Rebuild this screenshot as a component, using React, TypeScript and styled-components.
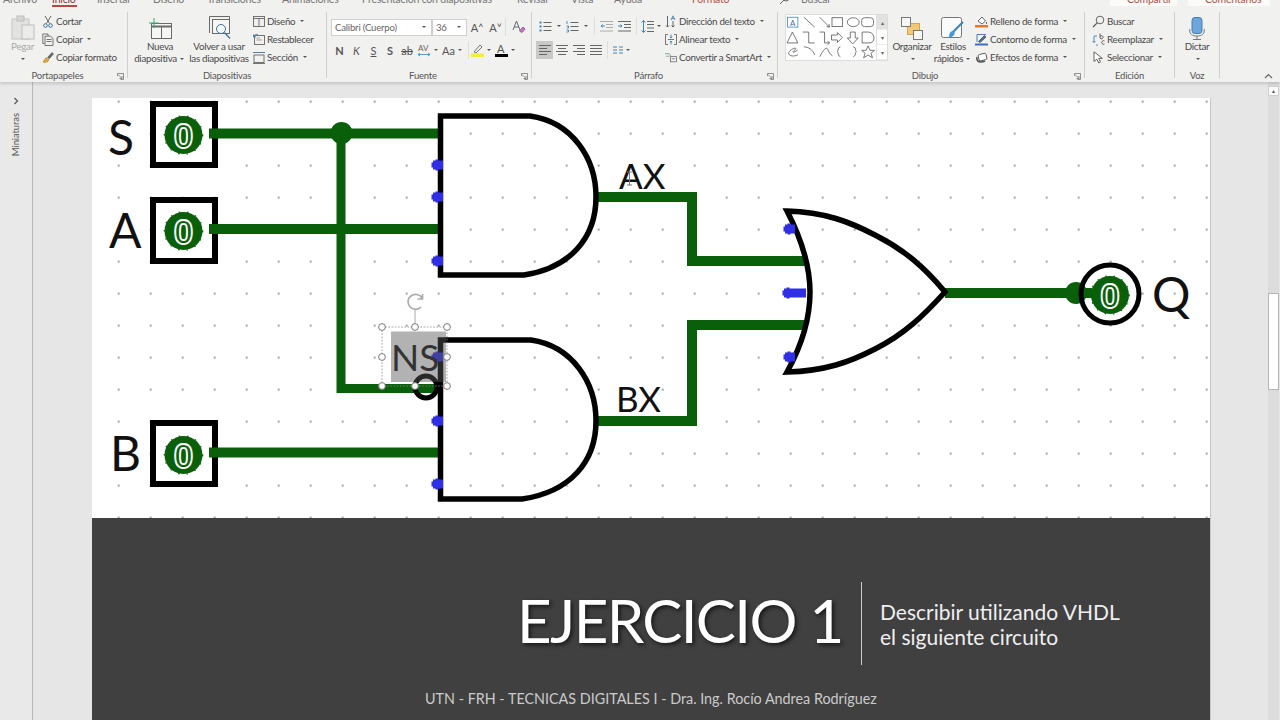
import React from "react";
import styled, { createGlobalStyle } from "styled-components";

const GlobalStyle = createGlobalStyle`
  html, body { margin: 0; padding: 0; height: 100%; overflow: hidden; background: #e6e6e6; }
  body { font-family: Lato, "Open Sans", sans-serif; color: #444; }
  #root { height: 100%; }
`;

const wire = "#0a5f0a";
const pin = "#2f2fe6";

const Window = styled.div`
  width: 1280px;
  height: 720px;
  display: flex;
  flex-direction: column;
  overflow: hidden;
`;

/* ---------- ribbon ---------- */

const Ribbon = styled.header`
  flex: none;
  height: 82px;
  background: #f1f1ef;
  box-shadow: 0 2px 3px rgba(0, 0, 0, 0.14);
  position: relative;
  z-index: 2;
`;

const TabBar = styled.nav`
  height: 8px;
  padding-left: 3px;
  display: flex;
  align-items: flex-end;
  overflow: hidden;
  font-size: 10.5px;
  letter-spacing: -0.2px;
  line-height: 14px;
  color: #777;
`;

const Tab = styled.span<{ $w: number; $active?: boolean; $red?: boolean }>`
  flex: none;
  width: ${(p) => p.$w}px;
  height: 14px;
  margin-bottom: 2px;
  white-space: nowrap;
  color: ${(p) => (p.$red ? "#b8544a" : p.$active ? "#8f3a32" : "#777")};
`;

const ActiveTab = styled(Tab)`
  position: relative;
  &::after {
    content: "";
    position: absolute;
    left: 0;
    top: 13px;
    width: 25px;
    height: 2px;
    background: #b5483c;
  }
`;

const TabSearch = styled.svg`
  flex: none;
  width: 11px;
  height: 11px;
  margin: 0 11px 3px 0;
`;

const ShareButton = styled.span<{ $w: number }>`
  flex: none;
  width: ${(p) => p.$w}px;
  height: 14px;
  box-sizing: border-box;
  padding-left: 17px;
  margin-right: 11px;
  margin-bottom: 2px;
  background: #fbfbfa;
  color: #b8544a;
  white-space: nowrap;
`;

const Groups = styled.div`
  display: flex;
  height: 74px;
`;

const Group = styled.section<{ $w: number }>`
  flex: none;
  width: ${(p) => p.$w}px;
  display: flex;
  flex-direction: column;
  padding-top: 4px;
  box-sizing: border-box;
`;

const Body = styled.div<{ $pl?: number }>`
  flex: none;
  height: 58px;
  padding-left: ${(p) => p.$pl ?? 0}px;
  display: flex;
`;

const GroupLabel = styled.div<{ $launcher?: boolean }>`
  position: relative;
  height: 12px;
  padding-right: ${(p) => (p.$launcher ? 12 : 0)}px;
  font-size: 9.5px;
  letter-spacing: -0.2px;
  line-height: 12px;
  text-align: center;
  color: #555;
`;

const Launcher = styled.svg`
  position: absolute;
  right: 3px;
  top: 3px;
  width: 7px;
  height: 7px;
`;

const Separator = styled.div`
  flex: none;
  width: 1px;
  margin: 4px 0 4px;
  background: #cfcfcd;
`;

const Column = styled.div<{ $ml?: number }>`
  display: flex;
  flex-direction: column;
  margin-left: ${(p) => p.$ml ?? 0}px;
`;

const SmallCommand = styled.div<{ $iconW?: number }>`
  height: 18px;
  display: flex;
  align-items: center;
  gap: 2px;
  font-size: 9.8px;
  letter-spacing: -0.3px;
  color: #4a4a4a;
  white-space: nowrap;
  svg {
    flex: none;
    width: ${(p) => p.$iconW ?? 12}px;
    height: 13px;
  }
`;

const BigCommand = styled.div<{ $w: number; $ml?: number; $muted?: boolean }>`
  flex: none;
  width: ${(p) => p.$w}px;
  margin-left: ${(p) => p.$ml ?? 0}px;
  display: flex;
  flex-direction: column;
  align-items: center;
  font-size: 9.8px;
  letter-spacing: -0.3px;
  line-height: 12px;
  color: ${(p) => (p.$muted ? "#aaa" : "#4a4a4a")};
  white-space: nowrap;
`;

const BigIcon = styled.div`
  height: 28px;
  display: flex;
  align-items: flex-end;
  svg {
    display: block;
  }
`;

const Caret = styled.span`
  display: inline-block;
  width: 0;
  height: 0;
  margin: 0 2px 1px 3px;
  vertical-align: middle;
  border-left: 2px solid transparent;
  border-right: 2px solid transparent;
  border-top: 2px solid #555;
`;

const FontPanel = styled.div`
  display: flex;
  flex-direction: column;
  gap: 5px;
  padding-top: 6px;
`;

const FontRow = styled.div`
  height: 18px;
  display: flex;
  align-items: center;
`;

const SelectBox = styled.div<{ $w: number }>`
  flex: none;
  width: ${(p) => p.$w}px;
  height: 17px;
  box-sizing: border-box;
  padding: 0 3px;
  background: #fff;
  border: 1px solid #cfcfcf;
  font-size: 9.6px;
  letter-spacing: -0.2px;
  line-height: 15px;
  color: #666;
  display: flex;
  align-items: center;
  justify-content: space-between;
`;

const FontButton = styled.span<{ $w: number; $bold?: boolean; $italic?: boolean; $under?: boolean; $strike?: boolean }>`
  flex: none;
  width: ${(p) => p.$w}px;
  display: flex;
  align-items: center;
  justify-content: center;
  font-size: 11px;
  color: #555;
  font-weight: ${(p) => (p.$bold ? 700 : 400)};
  font-style: ${(p) => (p.$italic ? "italic" : "normal")};
  text-decoration: ${(p) => (p.$under ? "underline" : p.$strike ? "line-through" : "none")};
`;

const IconSlot = styled.span<{ $w: number; $active?: boolean }>`
  flex: none;
  width: ${(p) => p.$w}px;
  height: 18px;
  display: flex;
  align-items: center;
  justify-content: center;
  background: ${(p) => (p.$active ? "#c9c9c9" : "transparent")};
`;

const ToolGap = styled.span<{ $w: number }>`
  flex: none;
  width: ${(p) => p.$w}px;
  height: 18px;
  display: flex;
  justify-content: center;
  &::before {
    content: "";
    width: 1px;
    background: #dededc;
  }
`;

const ParagraphPanel = styled.div`
  flex: none;
  width: 129px;
  display: flex;
  flex-direction: column;
  padding-top: 5px;
  gap: 6px;
`;

const Gallery = styled.div`
  flex: none;
  width: 103px;
  height: 47px;
  margin-top: 2px;
  display: flex;
  background: #fff;
  border: 1px solid #dcdcdc;
  box-sizing: border-box;
`;

const GalleryScroll = styled.div`
  flex: none;
  width: 10px;
  margin-left: auto;
  border-left: 1px solid #e0e0e0;
  display: flex;
  flex-direction: column;
`;

const GalleryStep = styled.span<{ $off?: boolean }>`
  flex: 1;
  display: flex;
  align-items: center;
  justify-content: center;
  background: ${(p) => (p.$off ? "#e2e2e2" : "#fff")};
  font-size: 6px;
  color: #666;
  border-bottom: 1px solid #eee;
`;

const Collapse = styled.svg`
  align-self: flex-end;
  flex: none;
  margin: 0 7px 3px auto;
  width: 9px;
  height: 6px;
`;

/* ---------- workspace ---------- */

const Workspace = styled.main`
  flex: 1;
  min-height: 0;
  display: flex;
  background: #e6e6e6;
`;

const Thumbnails = styled.aside`
  flex: none;
  width: 32px;
  border-right: 1px solid #b9b9b9;
  background: #e9e9e9;
  display: flex;
  flex-direction: column;
  align-items: center;
  padding-top: 15px;
  box-sizing: content-box;
`;

const ThumbLabel = styled.span`
  margin-top: 8px;
  writing-mode: vertical-rl;
  transform: rotate(180deg);
  font-size: 9.5px;
  letter-spacing: -0.1px;
  line-height: 10px;
  color: #555;
`;

const Stage = styled.div`
  flex: 1;
  min-width: 0;
  padding: 16px 0 0 59px;
`;

const Slide = styled.article`
  width: 1118px;
  height: 622px;
  display: flex;
  flex-direction: column;
  box-shadow: 1px 0 0 #c4c4c4;
`;

const Circuit = styled.svg`
  display: block;
  flex: none;
  width: 1118px;
  height: 420px;
  background: #fff;
  font-family: Lato, sans-serif;
`;

const Band = styled.div`
  flex: 1;
  background: #404040;
  color: #fff;
`;

const TitleRow = styled.div`
  margin-top: 64px;
  padding-left: 425px;
  height: 83px;
  display: flex;
  align-items: center;
`;

const Title = styled.h1`
  flex: none;
  width: 323px;
  margin: 0 21px 8px 0;
  font-size: 60px;
  font-weight: 400;
  line-height: 74px;
  letter-spacing: -1.65px;
  white-space: nowrap;
  text-shadow: 2px 2px 4px rgba(0, 0, 0, 0.65);
`;

const TitleRule = styled.div`
  flex: none;
  width: 1px;
  height: 83px;
  background: #cfcfcf;
`;

const Lead = styled.p`
  margin: 0 0 0 18px;
  font-size: 21px;
  line-height: 25px;
  color: #efefef;
  white-space: nowrap;
`;

const Byline = styled.p`
  margin: 25px 0 0;
  padding-left: 333px;
  font-size: 14.35px;
  line-height: 18px;
  color: #cbcbcb;
  white-space: nowrap;
`;

const Scrollbar = styled.div`
  flex: none;
  width: 11px;
  margin-right: 1px;
  background: #dcdcdc;
  display: flex;
  flex-direction: column;
`;

const ScrollUp = styled.div`
  flex: none;
  margin-top: 4px;
  height: 10px;
  background: #fafafa;
  border: 1px solid #cfcfcf;
  box-sizing: border-box;
  display: flex;
  align-items: center;
  justify-content: center;
  font-size: 5px;
  color: #555;
`;

const ScrollThumb = styled.div`
  flex: none;
  margin-top: 197px;
  height: 97px;
  background: #fff;
  border: 1px solid #b5b5b5;
  box-sizing: border-box;
`;

/* ---------- ribbon icons ---------- */

const launcher = (
  <Launcher viewBox="0 0 7 7" fill="none" stroke="#777" strokeWidth="0.8">
    <path d="M0.5 3V0.5H6.5V6.5H3.5M1 1.5L5 5.5M5 3V5.5H2.5" />
  </Launcher>
);

const Scissors = () => (
  <svg viewBox="0 0 12 13" fill="none" stroke="#3f6f9a" strokeWidth="1">
    <path d="M3 1L7.5 8.5M9 1L4.5 8.5" stroke="#666" />
    <circle cx="3.5" cy="10.5" r="1.8" />
    <circle cx="8.5" cy="10.5" r="1.8" />
  </svg>
);
const CopyIcon = () => (
  <svg viewBox="0 0 12 13" fill="none" stroke="#666" strokeWidth="0.9">
    <path d="M2.5 10.5H.8V1H6V3" />
    <path d="M3 3.2H8.5L11 5.5V12.5H3ZM4.5 6.5H9.5M4.5 8.5H9.5" />
  </svg>
);
const Brush = () => (
  <svg viewBox="0 0 12 13" fill="none">
    <path d="M1 11L4 6.5L7 9C6 11 3 12 1 11Z" fill="#e0a93f" stroke="#a87a22" strokeWidth="0.6" />
    <path d="M5.5 6.5L10 1.5L11.5 3L7 8" fill="#666" stroke="#555" strokeWidth="0.6" />
  </svg>
);
const LayoutIcon = () => (
  <svg viewBox="0 0 12 13" fill="none" stroke="#666" strokeWidth="0.9">
    <rect x="0.5" y="1.5" width="11" height="10" fill="#eee" />
    <path d="M0.5 3.5H11.5M6 3.5V11.5" />
  </svg>
);
const ResetIcon = () => (
  <svg viewBox="0 0 12 13" fill="none" stroke="#666" strokeWidth="0.9">
    <rect x="1.5" y="2.5" width="10" height="9" />
    <path d="M3.5 5H7M3.5 7H9" stroke="#999" />
    <path d="M0.5 4C1 2 3 1 5 1.5M0.5 1.5V4H3" stroke="#3f7fb5" />
  </svg>
);
const SectionIcon = () => (
  <svg viewBox="0 0 12 13" fill="none" stroke="#666" strokeWidth="0.9">
    <rect x="1" y="4" width="10" height="7.5" />
    <path d="M0 1.5H12" stroke="#3f6f9a" />
    <path d="M0 12.5H12" />
  </svg>
);
const NewSlide = () => (
  <svg width="24" height="22" viewBox="0 0 24 22" fill="none" stroke="#6a6a6a">
    <rect x="3.5" y="5.5" width="20" height="15" fill="#f6f6f5" />
    <path d="M3.5 8.5H23.5" strokeWidth="2" />
    <path d="M13.5 9V20.5" />
    <path d="M6 0V10M1 5H11" stroke="#3da878" />
  </svg>
);
const ReuseSlide = () => (
  <svg width="24" height="24" viewBox="0 0 24 24" fill="none" stroke="#6a6a6a">
    <path d="M2.5 17V0.5H22.5V14" />
    <rect x="5.5" y="3.5" width="17" height="14" fill="#f6f6f5" />
    <circle cx="14" cy="13" r="4.5" stroke="#3f6f9a" fill="#f8fbfd" />
    <path d="M17.5 16.5L23 22.5" stroke="#3f6f9a" strokeWidth="1.3" />
  </svg>
);
const Paste = () => (
  <svg width="24" height="25" viewBox="0 0 24 25" fill="none">
    <rect x="1" y="4" width="17" height="20" fill="#e2e2e0" stroke="#c4c4c2" />
    <rect x="6" y="1" width="7" height="5" fill="#d6d6d4" stroke="#bdbdbb" />
    <rect x="11" y="10" width="12" height="14" fill="#ececea" stroke="#bdbdbb" />
  </svg>
);
const Bullets = () => (
  <svg width="13" height="13" viewBox="0 0 13 13" fill="none" stroke="#666">
    <path d="M4.5 2.5H12.5M4.5 6.5H12.5M4.5 10.5H12.5" />
    <path d="M.5 2.5H2.5M.5 6.5H2.5M.5 10.5H2.5" stroke="#3f84b5" strokeWidth="2" />
  </svg>
);
const Numbers = () => (
  <svg width="13" height="13" viewBox="0 0 13 13" fill="none" stroke="#666">
    <path d="M4.5 2.5H12.5M4.5 6.5H12.5M4.5 10.5H12.5" />
    <path d="M1 1V4M.5 6H2.5V8H1M.5 10H2.5V12H.5" stroke="#3f84b5" strokeWidth="0.9" />
  </svg>
);
const Indent = ({ out }: { out?: boolean }) => (
  <svg width="13" height="11" viewBox="0 0 13 11" fill="none" stroke={out ? "#aaa" : "#666"}>
    <path d="M0 .5H13M6 3.5H13M6 6.5H13M0 10H13" />
    <path d={out ? "M5 5H1M2.5 3.5L1 5L2.5 6.5" : "M0 5H4M2.5 3.5L4 5L2.5 6.5"} stroke="#3f84b5" />
  </svg>
);
const LineSpacing = () => (
  <svg width="13" height="13" viewBox="0 0 13 13" fill="none" stroke="#666">
    <path d="M6 1.5H13M6 4.5H13M6 8H13M6 11.5H13" />
    <path d="M2.5 .5V12.5M.5 2.5L2.5 .5L4.5 2.5M.5 10.5L2.5 12.5L4.5 10.5" stroke="#3f84b5" />
  </svg>
);
const Align = ({ mode }: { mode: "l" | "c" | "r" | "j" }) => {
  const lines: Record<string, string> = {
    l: "M0 1.5H12M0 4.5H8M0 7.5H12M0 10.5H8",
    c: "M0 1.5H12M2 4.5H10M0 7.5H12M2 10.5H10",
    r: "M0 1.5H12M4 4.5H12M0 7.5H12M4 10.5H12",
    j: "M0 1.5H12M0 4.5H12M0 7.5H12M0 10.5H12",
  };
  return (
    <svg width="12" height="12" viewBox="0 0 12 12" fill="none" stroke="#666">
      <path d={lines[mode]} />
    </svg>
  );
};
const ColumnsIcon = () => (
  <svg width="10" height="8" viewBox="0 0 10 8" fill="none" stroke="#3f84b5">
    <path d="M0 1H4M6 1H10M0 4H4M6 4H10M0 7H4M6 7H10" />
  </svg>
);
const TextDirection = () => (
  <svg viewBox="0 0 12 13" fill="none" stroke="#555" strokeWidth="0.9">
    <path d="M2.5 1V12M1 10.5L2.5 12L4 10.5" />
    <path d="M6 5L8 .8L10 5M6.8 3.6H9.2" stroke="#3f84b5" />
    <path d="M8 6V12M6.5 10.5L8 12L9.5 10.5" />
  </svg>
);
const AlignText = () => (
  <svg viewBox="0 0 12 13" fill="none" stroke="#666" strokeWidth="0.9">
    <path d="M3 1.5H.5V11.5H3M9 1.5H11.5V11.5H9" />
    <path d="M3 6.5H9" />
    <path d="M6 1.5V5M4.8 3.8L6 5L7.2 3.8M6 11.5V8M4.8 9.2L6 8L7.2 9.2" stroke="#3f84b5" />
  </svg>
);
const SmartArt = () => (
  <svg viewBox="0 0 14 13" fill="none" stroke="#5d9c7d" strokeWidth="0.9">
    <path d="M0 2H5L7 5M1 5H5" />
    <rect x="6.5" y="5.5" width="7" height="6" fill="#f5f5f5" stroke="#666" />
    <path d="M8 8H12" stroke="#666" />
  </svg>
);
const Fill = () => (
  <svg viewBox="0 0 13 13" fill="none" stroke="#555" strokeWidth="0.9">
    <path d="M3 6L7 2L10.5 6L7 9Z" fill="#fff" />
    <path d="M11.5 7V9" />
    <rect x="0" y="10" width="13" height="2.5" fill="#dd7a33" stroke="none" />
  </svg>
);
const Outline = () => (
  <svg viewBox="0 0 13 13" fill="none" strokeWidth="0.9">
    <path d="M2 9V1.5H11" stroke="#3f6fb5" />
    <path d="M3.5 8.5L9.5 2.5L11 4L5 9.5Z" fill="#3f6fb5" stroke="#555" />
    <rect x="0" y="10.5" width="13" height="2" fill="#3f6fb5" />
  </svg>
);
const Effects = () => (
  <svg viewBox="0 0 13 13" fill="none" stroke="#555" strokeWidth="0.9">
    <rect x="3.5" y="3" width="8" height="6.5" rx="1.5" transform="rotate(-15 7 6)" fill="#fff" />
    <path d="M2 6C1 9 3 11 6 11C8 11 9 10.5 10 10" strokeWidth="1.6" />
  </svg>
);
const Find = () => (
  <svg viewBox="0 0 13 13" fill="none" stroke="#555" strokeWidth="0.9">
    <circle cx="8" cy="5" r="3.8" />
    <path d="M5.2 7.8L1 12" strokeWidth="1.2" />
  </svg>
);
const Replace = () => (
  <svg viewBox="0 0 13 13" fill="none" stroke="#3f84b5" strokeWidth="0.9">
    <path d="M5 3H2V9.5M.6 8L2 9.5L3.4 8M4 12H6" />
    <path d="M8 .5V5A1.6 1.6 0 1 0 8 3.5" stroke="#555" />
    <path d="M12.5 8A1.8 1.8 0 1 0 12.5 11" stroke="#555" />
  </svg>
);
const Pointer = () => (
  <svg viewBox="0 0 13 13" fill="none" stroke="#555" strokeWidth="0.9">
    <path d="M2 .8V10.5L4.8 8.2L6.8 12L8.6 11L6.7 7.4H10.4Z" fill="#fff" />
  </svg>
);
const ArrangeIcon = () => (
  <svg width="22" height="23" viewBox="0 0 22 23" fill="none" stroke="#777">
    <rect x="6.5" y="6.5" width="12" height="11" fill="#f1c878" stroke="#d9a347" />
    <rect x="0.5" y="0.5" width="9" height="9" fill="#f6f6f5" />
    <rect x="12.5" y="13.5" width="9" height="9" fill="#f6f6f5" />
  </svg>
);
const StylesIcon = () => (
  <svg width="24" height="23" viewBox="0 0 24 23" fill="none">
    <rect x="0.5" y="0.5" width="20" height="20" rx="2" fill="#fafafa" stroke="#777" />
    <path d="M22 5L12 15" stroke="#3f84b5" strokeWidth="2.2" />
    <path d="M8 21C8 17 9 14 12 14C15 15 14 19 8 21Z" fill="#3f9ad6" />
  </svg>
);
const Mic = () => (
  <svg width="16" height="23" viewBox="0 0 16 23" fill="none">
    <rect x="3" y="0.5" width="10" height="16" rx="3" fill="#6ea6dc" stroke="#3f7fb5" />
    <path d="M.8 12V14C.8 17 3 19 8 19C13 19 15.2 17 15.2 14V12M8 19V22M4 22.5H12" stroke="#777" />
  </svg>
);

const ShapesGalleryArt = () => (
  <svg width="91" height="45" viewBox="786 15 91 45" fill="none" stroke="#555" strokeWidth="0.8">
    <rect x="787.5" y="17" width="10.5" height="10" stroke="#3f84b5" />
    <text x="790" y="25.5" fontSize="8" fill="#3f6fb5" stroke="none" fontFamily="Lato, sans-serif">A</text>
    <path d="M804 17L815 27M820 17L830 27M830 27L827 26.5M830 27L829.5 24" />
    <rect x="832.5" y="17.5" width="10.5" height="9" />
    <ellipse cx="854" cy="22" rx="6" ry="4.5" />
    <rect x="862.5" y="17.5" width="12" height="9" rx="3" />
    <path d="M787 43L792.5 32L798 43ZM803 32H809V43H815M820 32H825V43H830M828 41L830 43L828 45" />
    <path d="M832 35H838V32.5L843 37.5L838 42.5V40H832Z" />
    <path d="M851 32H856V38H859L853.5 44L848 38H851Z" />
    <path d="M863 32H869C873 32 875 35 875 38C875 41 873 43 870 43H863Z" />
    <path d="M798 55C792 58 786 55 790 51C793 48 798 47 795 50C790 54 796 52 798 50" />
    <path d="M804 47C809 47 813 50 815 55M820 57C824 50 826 47 828 49C829 52 831 55 833 56" />
    <path d="M841 47C838 47 839 51 838 52C839 52 838 56 841 57M854 47C857 47 856 51 857 52C856 52 857 56 854 57" />
    <path d="M869 46L871 50.5H875.5L872 53.5L873.5 58L869 55.2L864.5 58L866 53.5L862.5 50.5H867Z" />
  </svg>
);

/* ---------- circuit ---------- */

const LedDigit = ({ cx, cy }: { cx: number; cy: number }) => (
  <g>
    <circle cx={cx} cy={cy} r="19" fill={wire} />
    <circle cx={cx} cy={cy} r="19.2" fill="none" stroke={wire} strokeWidth="1.2" strokeDasharray="1.5 7" />
    <text
      x={cx}
      y={cy + 12.5}
      textAnchor="middle"
      fontFamily='"Liberation Sans", sans-serif'
      fontWeight="700"
      fontSize="35"
      fill={wire}
      stroke="#fff"
      strokeWidth="1.8"
    >
      0
    </text>
  </g>
);

const InputSwitch = ({ y, cy }: { y: number; cy: number }) => (
  <g>
    <rect x="153" y={y + 3} width="62" height="61" fill="#fff" stroke="#000" strokeWidth="6" />
    <LedDigit cx={183.5} cy={cy} />
  </g>
);

const Pin = ({ x, y, w = 10 }: { x: number; y: number; w?: number }) => (
  <g fill={pin}>
    <rect x={x - 4} y={y - 4.5} width={w} height="9" />
    <rect x={x - 5.5} y={y - 2.5} width="3" height="5" />
    <rect x={x - 1.5} y={y - 5.5} width="3" height="11" />
  </g>
);

const Handle = ({ x, y }: { x: number; y: number }) => (
  <circle cx={x} cy={y} r="3.4" fill="#fff" stroke="#7a7a7a" strokeWidth="1" />
);

const handles: [number, number][] = [
  [382, 327],
  [415, 327],
  [447, 327],
  [382, 357],
  [447, 357],
  [382, 386],
  [415, 386],
  [447, 386],
];

const CircuitDrawing = () => (
  <Circuit viewBox="92 98 1118 420">
    <defs>
      <pattern id="grid" patternUnits="userSpaceOnUse" x="102.7" y="85.6" width="32" height="32">
        <circle cx="16" cy="16" r="1.1" fill="#8e8e8e" />
      </pattern>
    </defs>
    <rect x="92" y="98" width="1118" height="420" fill="url(#grid)" />

    <InputSwitch y={101} cy={135} />
    <InputSwitch y={197} cy={231} />
    <InputSwitch y={420} cy={455} />

    <g stroke={wire} strokeWidth="10" fill="none">
      <path d="M209 133.5H440" />
      <path d="M209 229H440" />
      <path d="M209 452.5H440" />
      <path d="M341 133V388.5H440" strokeWidth="9" />
      <path d="M596 197H692V261H806" />
      <path d="M596 421H692V325H806" />
      <path d="M945 293H1092" />
    </g>
    <circle cx="341.5" cy="133" r="11" fill={wire} />
    <circle cx="1076" cy="293" r="11" fill={wire} />

    <g fill="none" stroke="#000" strokeWidth="5.5">
      <path d="M440.5 116H530C572 122 596 158 596 197C596 238 570 268 524 275H440.5Z" />
      <path d="M440.5 340H531C572 346 596 382 596 421C596 462 570 492 522 499H440.5Z" />
      <path d="M787 211C802 240 810 265 810 292C810 320 802 345 787 372C825 371 850 362 875 349C905 334 925 314 945 292C925 268 905 250 875 235C850 222 825 212 787 211Z" />
      <circle cx="1110" cy="294" r="29" strokeWidth="5" />
      <circle cx="426" cy="387" r="11" strokeWidth="5" />
    </g>

    <Pin x={437} y={165} />
    <Pin x={437} y={197} />
    <Pin x={437} y={261} />
    <Pin x={437} y={357} />
    <Pin x={437} y={421} />
    <Pin x={437} y={484} />
    <Pin x={789} y={229} />
    <Pin x={788} y={293} w={22} />
    <Pin x={789} y={357} />

    <LedDigit cx={1110} cy={295} />

    <g fontSize="48" fill="#111">
      <text x="108" y="155">S</text>
      <text x="109" y="248">A</text>
      <text x="110" y="471">B</text>
      <text x="1152" y="312">Q</text>
    </g>
    <g fontSize="35" fill="#111">
      <text x="619" y="189">AX</text>
      <text x="616" y="412">BX</text>
    </g>
    <path d="M627 172H632M629.5 172V185M627 185H632" stroke="#777" strokeWidth="1" fill="none" />

    <rect x="391" y="331.5" width="55" height="50.5" fill="#585858" fillOpacity="0.46" />
    <text x="391" y="370.5" fontSize="37" fill="#333">NS</text>
    <rect x="382" y="327" width="65" height="59" fill="none" stroke="#888" strokeWidth="0.8" strokeDasharray="1.6 1.6" />
    <path d="M415 309V327" stroke="#aaa" strokeWidth="1" />
    <path
      d="M421 307A7.5 7.5 0 1 1 422 298M422.5 294V299H417.5"
      fill="none"
      stroke="#aaa"
      strokeWidth="1.7"
    />
    {handles.map(([x, y]) => (
      <Handle key={`${x}-${y}`} x={x} y={y} />
    ))}
  </Circuit>
);

const App = () => (
  <Window>
    <GlobalStyle />
    <Ribbon>
      <TabBar>
        <Tab $w={49}>Archivo</Tab>
        <ActiveTab $w={45} $active>Inicio</ActiveTab>
        <Tab $w={56}>Insertar</Tab>
        <Tab $w={54}>Diseño</Tab>
        <Tab $w={75}>Transiciones</Tab>
        <Tab $w={80}>Animaciones</Tab>
        <Tab $w={155}>Presentación con diapositivas</Tab>
        <Tab $w={54}>Revisar</Tab>
        <Tab $w={43}>Vista</Tab>
        <Tab $w={78}>Ayuda</Tab>
        <Tab $w={87} $red>Formato</Tab>
        <TabSearch viewBox="0 0 11 11" fill="none" stroke="#666">
          <circle cx="7" cy="4" r="3" />
          <path d="M5 6L1 10" />
        </TabSearch>
        <Tab $w={309}>Buscar</Tab>
        <ShareButton $w={67}>Compartir</ShareButton>
        <ShareButton $w={82}>Comentarios</ShareButton>
      </TabBar>
      <Groups>
        <Group $w={127}>
          <Body $pl={3}>
            <BigCommand $w={39} $muted>
              <BigIcon><Paste /></BigIcon>
              <span>Pegar</span>
              <span><Caret /></span>
            </BigCommand>
            <Column>
              <SmallCommand><Scissors />Cortar</SmallCommand>
              <SmallCommand><CopyIcon />Copiar<Caret /></SmallCommand>
              <SmallCommand><Brush />Copiar formato</SmallCommand>
            </Column>
          </Body>
          <GroupLabel $launcher>Portapapeles{launcher}</GroupLabel>
        </Group>
        <Separator />
        <Group $w={198}>
          <Body $pl={7}>
            <BigCommand $w={50}>
              <BigIcon><NewSlide /></BigIcon>
              <span>Nueva</span>
              <span>diapositiva<Caret /></span>
            </BigCommand>
            <BigCommand $w={60} $ml={4}>
              <BigIcon><ReuseSlide /></BigIcon>
              <span>Volver a usar</span>
              <span>las diapositivas</span>
            </BigCommand>
            <Column $ml={4}>
              <SmallCommand><LayoutIcon />Diseño<Caret /></SmallCommand>
              <SmallCommand><ResetIcon />Restablecer</SmallCommand>
              <SmallCommand><SectionIcon />Sección<Caret /></SmallCommand>
            </Column>
          </Body>
          <GroupLabel>Diapositivas</GroupLabel>
        </Group>
        <Separator />
        <Group $w={204}>
          <Body $pl={4}>
            <FontPanel>
              <FontRow>
                <SelectBox $w={101}>Calibri (Cuerpo)<Caret /></SelectBox>
                <SelectBox $w={35}>36<Caret /></SelectBox>
                <FontButton $w={20}>A˄</FontButton>
                <FontButton $w={17}>A˅</FontButton>
                <ToolGap $w={3} />
                <IconSlot $w={24}>
                  <svg width="14" height="14" viewBox="0 0 14 14" fill="none" stroke="#666">
                    <path d="M1 10L4.5 1L8 10M2.2 7H6.8" />
                    <path d="M7.5 11L11 7L13 9L10 12.5Z" fill="#c77ac9" stroke="#a055a5" />
                  </svg>
                </IconSlot>
              </FontRow>
              <FontRow>
                <FontButton $w={17} $bold>N</FontButton>
                <FontButton $w={17} $italic>K</FontButton>
                <FontButton $w={17} $under>S</FontButton>
                <FontButton $w={16} $bold>S</FontButton>
                <FontButton $w={18} $strike>ab</FontButton>
                <IconSlot $w={24}>
                  <svg width="14" height="14" viewBox="0 0 14 14" fill="none">
                    <text x="1" y="8" fontSize="8" fill="#666" fontFamily="Lato, sans-serif">AV</text>
                    <path d="M1 11.5H13M3 10L1 11.5L3 13M11 10L13 11.5L11 13" stroke="#3f84b5" strokeWidth="0.8" />
                  </svg>
                  <Caret />
                </IconSlot>
                <FontButton $w={26}>Aa<Caret /></FontButton>
                <ToolGap $w={4} />
                <IconSlot $w={24}>
                  <svg width="13" height="14" viewBox="0 0 13 14" fill="none">
                    <path d="M3 9L9 2L11 4L5 10Z" stroke="#777" />
                    <rect x="0" y="10.5" width="13" height="3.5" fill="#f3ee3c" />
                  </svg>
                  <Caret />
                </IconSlot>
                <IconSlot $w={24}>
                  <svg width="13" height="14" viewBox="0 0 13 14" fill="none">
                    <text x="2" y="10" fontSize="11" fill="#555" fontFamily="Lato, sans-serif">A</text>
                    <rect x="0" y="11" width="13" height="3" fill="#000" />
                  </svg>
                  <Caret />
                </IconSlot>
              </FontRow>
            </FontPanel>
          </Body>
          <GroupLabel $launcher>Fuente{launcher}</GroupLabel>
        </Group>
        <Separator />
        <Group $w={245}>
          <Body $pl={4}>
            <ParagraphPanel>
              <FontRow>
                <IconSlot $w={18}><Bullets /></IconSlot><Caret />
                <IconSlot $w={18}><Numbers /></IconSlot><Caret />
                <ToolGap $w={8} />
                <IconSlot $w={17}><Indent out /></IconSlot>
                <IconSlot $w={18}><Indent /></IconSlot>
                <ToolGap $w={7} />
                <IconSlot $w={14}><LineSpacing /></IconSlot><Caret />
              </FontRow>
              <FontRow>
                <IconSlot $w={17} $active><Align mode="l" /></IconSlot>
                <IconSlot $w={17}><Align mode="c" /></IconSlot>
                <IconSlot $w={17}><Align mode="r" /></IconSlot>
                <IconSlot $w={17}><Align mode="j" /></IconSlot>
                <ToolGap $w={6} />
                <IconSlot $w={24}><ColumnsIcon /><Caret /></IconSlot>
              </FontRow>
            </ParagraphPanel>
            <Column>
              <SmallCommand><TextDirection />Dirección del texto<Caret /></SmallCommand>
              <SmallCommand><AlignText />Alinear texto<Caret /></SmallCommand>
              <SmallCommand><SmartArt />Convertir a SmartArt<Caret /></SmallCommand>
            </Column>
          </Body>
          <GroupLabel $launcher>Párrafo{launcher}</GroupLabel>
        </Group>
        <Separator />
        <Group $w={306}>
          <Body $pl={7}>
            <Gallery>
              <ShapesGalleryArt />
              <GalleryScroll>
                <GalleryStep $off>▴</GalleryStep>
                <GalleryStep>▾</GalleryStep>
                <GalleryStep>▾</GalleryStep>
              </GalleryScroll>
            </Gallery>
            <BigCommand $w={42} $ml={3}>
              <BigIcon><ArrangeIcon /></BigIcon>
              <span>Organizar</span>
              <span><Caret /></span>
            </BigCommand>
            <BigCommand $w={40}>
              <BigIcon><StylesIcon /></BigIcon>
              <span>Estilos</span>
              <span>rápidos<Caret /></span>
            </BigCommand>
            <Column $ml={2}>
              <SmallCommand $iconW={13}><Fill />Relleno de forma<Caret /></SmallCommand>
              <SmallCommand $iconW={13}><Outline />Contorno de forma<Caret /></SmallCommand>
              <SmallCommand $iconW={13}><Effects />Efectos de forma<Caret /></SmallCommand>
            </Column>
          </Body>
          <GroupLabel $launcher>Dibujo{launcher}</GroupLabel>
        </Group>
        <Separator />
        <Group $w={89}>
          <Body $pl={7}>
            <Column>
              <SmallCommand $iconW={13}><Find />Buscar</SmallCommand>
              <SmallCommand $iconW={13}><Replace />Reemplazar<Caret /></SmallCommand>
              <SmallCommand $iconW={13}><Pointer />Seleccionar<Caret /></SmallCommand>
            </Column>
          </Body>
          <GroupLabel>Edición</GroupLabel>
        </Group>
        <Separator />
        <Group $w={44}>
          <Body>
            <BigCommand $w={44}>
              <BigIcon><Mic /></BigIcon>
              <span>Dictar</span>
              <span><Caret /></span>
            </BigCommand>
          </Body>
          <GroupLabel>Voz</GroupLabel>
        </Group>
        <Separator />
        <Collapse viewBox="0 0 9 6" fill="none" stroke="#666" strokeWidth="1.2">
          <path d="M1 5L4.5 1.5L8 5" />
        </Collapse>
      </Groups>
    </Ribbon>
    <Workspace>
      <Thumbnails>
        <svg width="6" height="8" viewBox="0 0 6 8" fill="none" stroke="#555" strokeWidth="1.2">
          <path d="M1.5 1L4.5 4L1.5 7" />
        </svg>
        <ThumbLabel>Miniaturas</ThumbLabel>
      </Thumbnails>
      <Stage>
        <Slide>
          <CircuitDrawing />
          <Band>
            <TitleRow>
              <Title>EJERCICIO 1</Title>
              <TitleRule />
              <Lead>
                Describir utilizando VHDL
                <br />
                el siguiente circuito
              </Lead>
            </TitleRow>
            <Byline>UTN - FRH - TECNICAS DIGITALES I - Dra. Ing. Rocío Andrea Rodríguez</Byline>
          </Band>
        </Slide>
      </Stage>
      <Scrollbar>
        <ScrollUp>▲</ScrollUp>
        <ScrollThumb />
      </Scrollbar>
    </Workspace>
  </Window>
);

export default App;
